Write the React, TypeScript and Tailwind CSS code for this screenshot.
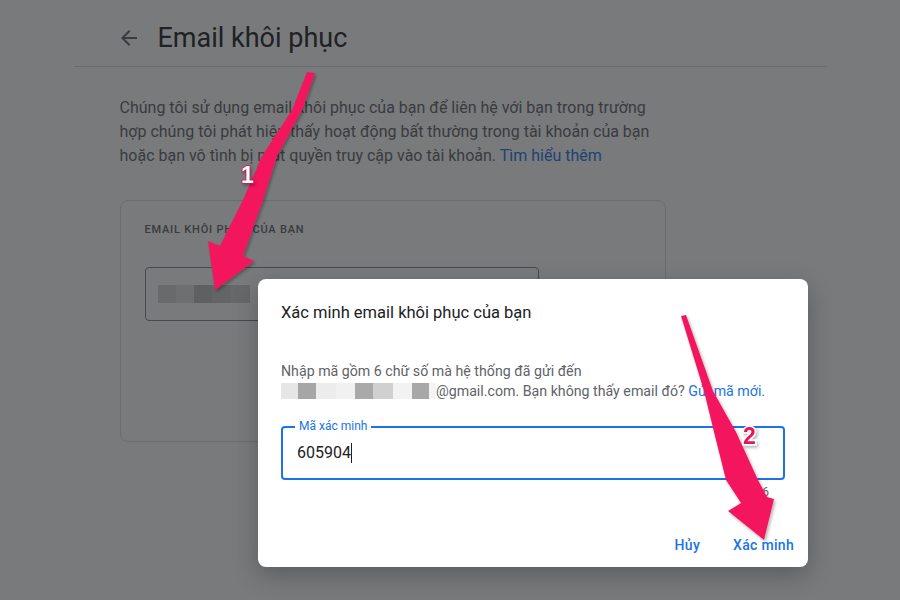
import React from "react";

const ArrowBack = () => (
  <svg width="24" height="24" viewBox="0 0 24 24" fill="#5f6368">
    <path d="M20 11H7.83l5.59-5.59L12 4l-8 8 8 8 1.41-1.41L7.83 13H20v-2z" />
  </svg>
);

const inputBlocks = [
  { w: 18, c: "#d6d6d6" },
  { w: 18, c: "#e4e4e4" },
  { w: 18, c: "#bdbdbd" },
  { w: 18, c: "#c9c9c9" },
  { w: 20, c: "#d3d3d3" },
];

const emailBlocks = [
  { w: 17, c: "#e6e6e6" },
  { w: 18, c: "#a6a6a6" },
  { w: 20, c: "#ececec" },
  { w: 19, c: "#f1f1f1" },
  { w: 18, c: "#a9a9a9" },
  { w: 20, c: "#d0d0d0" },
  { w: 19, c: "#f2f2f2" },
  { w: 17, c: "#a8a8a8" },
  { w: 7, c: "#f4f4f4" },
];

export default function App() {
  return (
    <div className="relative w-[900px] h-[600px] overflow-hidden bg-white font-['Roboto',sans-serif]">
      <div className="w-[753px] mx-auto">
        <header className="h-[67px] pt-[10px] pl-[43px] flex items-center border-b border-[#dadce0]">
          <ArrowBack />
          <h1 className="ml-[17px] text-[27px] leading-[32px] text-[#202124]">Email khôi phục</h1>
        </header>
        <div className="pl-[46px]">
          <p className="mt-[29px] text-[16px] leading-[24px] text-[#5f6368] whitespace-nowrap">
            Chúng tôi sử dụng email khôi phục của bạn để liên hệ với bạn trong trường
            <br />
            hợp chúng tôi phát hiện thấy hoạt động bất thường trong tài khoản của bạn
            <br />
            hoặc bạn vô tình bị mất quyền truy cập vào tài khoản.{" "}
            <a className="text-[#1a73e8]">Tìm hiểu thêm</a>
          </p>
          <div className="mt-[32px] w-[546px] h-[242px] border border-[#dadce0] rounded-lg pt-[23px] pl-[24px]">
            <div className="text-[11px] leading-[12px] font-medium tracking-[0.8px] text-[#5f6368]">
              EMAIL KHÔI PHỤC CỦA BẠN
            </div>
            <div className="mt-[31px] w-[394px] h-[54px] border border-[#80868b] rounded flex items-center pl-[12px]">
              <div className="flex h-[18px]">
                {inputBlocks.map((b, i) => (
                  <div key={i} className="h-full" style={{ width: b.w, background: b.c }} />
                ))}
              </div>
            </div>
          </div>
        </div>
      </div>

      <div className="absolute inset-0 bg-[rgba(32,33,36,0.6)]" />

      <div className="absolute left-[258px] top-[279px] w-[550px] h-[288px] bg-white rounded-lg shadow-[0_8px_24px_rgba(0,0,0,0.25)] flex flex-col pt-[22px]">
        <h2 className="px-[23px] text-[16.5px] leading-[24px] text-[#202124]">
          Xác minh email khôi phục của bạn
        </h2>
        <p className="mt-[36px] px-[23px] text-[14.2px] leading-[20px] text-[#5f6368] whitespace-nowrap">
          Nhập mã gồm 6 chữ số mà hệ thống đã gửi đến
          <br />
          <span className="inline-flex h-[16px] align-[-3px]">
            {emailBlocks.map((b, i) => (
              <span key={i} className="h-full" style={{ width: b.w, background: b.c }} />
            ))}
          </span>
          @gmail.com. Bạn không thấy email đó?{" "}
          <a className="text-[#1a73e8]">Gửi mã mới.</a>
        </p>
        <div className="relative mx-[23px] mt-[25px] h-[54px] border-2 border-[#1a73e8] rounded flex items-center pl-[14px]">
          <span className="absolute -top-[9px] left-[12px] px-[4px] bg-white text-[12px] leading-[14px] text-[#1a73e8]">
            Mã xác minh
          </span>
          <span className="text-[16px] leading-[20px] text-[#202124]">605904</span>
          <span className="w-px h-[20px] bg-[#202124]" />
        </div>
        <div className="mt-[4px] pr-[39px] text-right text-[12px] leading-[16px] text-[#5f6368]">6/6</div>
        <div className="mt-auto flex justify-end gap-[17px] pr-[6px] pb-[4px]">
          <button className="h-[36px] px-[8px] text-[14px] font-medium tracking-[0.3px] text-[#1a73e8]">Hủy</button>
          <button className="h-[36px] px-[8px] text-[14px] font-medium tracking-[0.3px] text-[#1a73e8]">Xác minh</button>
        </div>
      </div>

      <svg
        className="absolute inset-0 pointer-events-none"
        width="900"
        height="600"
        viewBox="0 0 900 600"
      >
        <defs>
          <filter id="sh" x="-30%" y="-30%" width="160%" height="160%">
            <feDropShadow dx="1.5" dy="2" stdDeviation="1.5" floodColor="#000" floodOpacity="0.3" />
          </filter>
        </defs>
        <polygon
          points="307,72 315,73 302,110 277,156 263,200 243,256 254,261 215,290 208,241 220,246 243,200 262,156 292,110"
          fill="#f3175f"
          filter="url(#sh)"
        />
        <polygon
          points="681,316 686,315 713,391 736,432 758,480 767,497 774,499 764,540 728,511 741,503 726,480 714,432 704,391"
          fill="#f3175f"
          filter="url(#sh)"
        />
        <text
          x="247.5"
          y="183"
          textAnchor="middle"
          fontFamily="'Liberation Sans', Arial, sans-serif"
          fontWeight="700"
          fontSize="23"
          fill="#ffffff"
          stroke="#d1124f"
          strokeWidth="1.5"
          paintOrder="stroke"
          filter="url(#sh)"
        >
          1
        </text>
        <text
          x="749.5"
          y="444"
          textAnchor="middle"
          fontFamily="'Liberation Sans', Arial, sans-serif"
          fontWeight="700"
          fontSize="23"
          fill="#e5175a"
          stroke="#ffffff"
          strokeWidth="3"
          paintOrder="stroke"
          filter="url(#sh)"
        >
          2
        </text>
      </svg>
    </div>
  );
}
